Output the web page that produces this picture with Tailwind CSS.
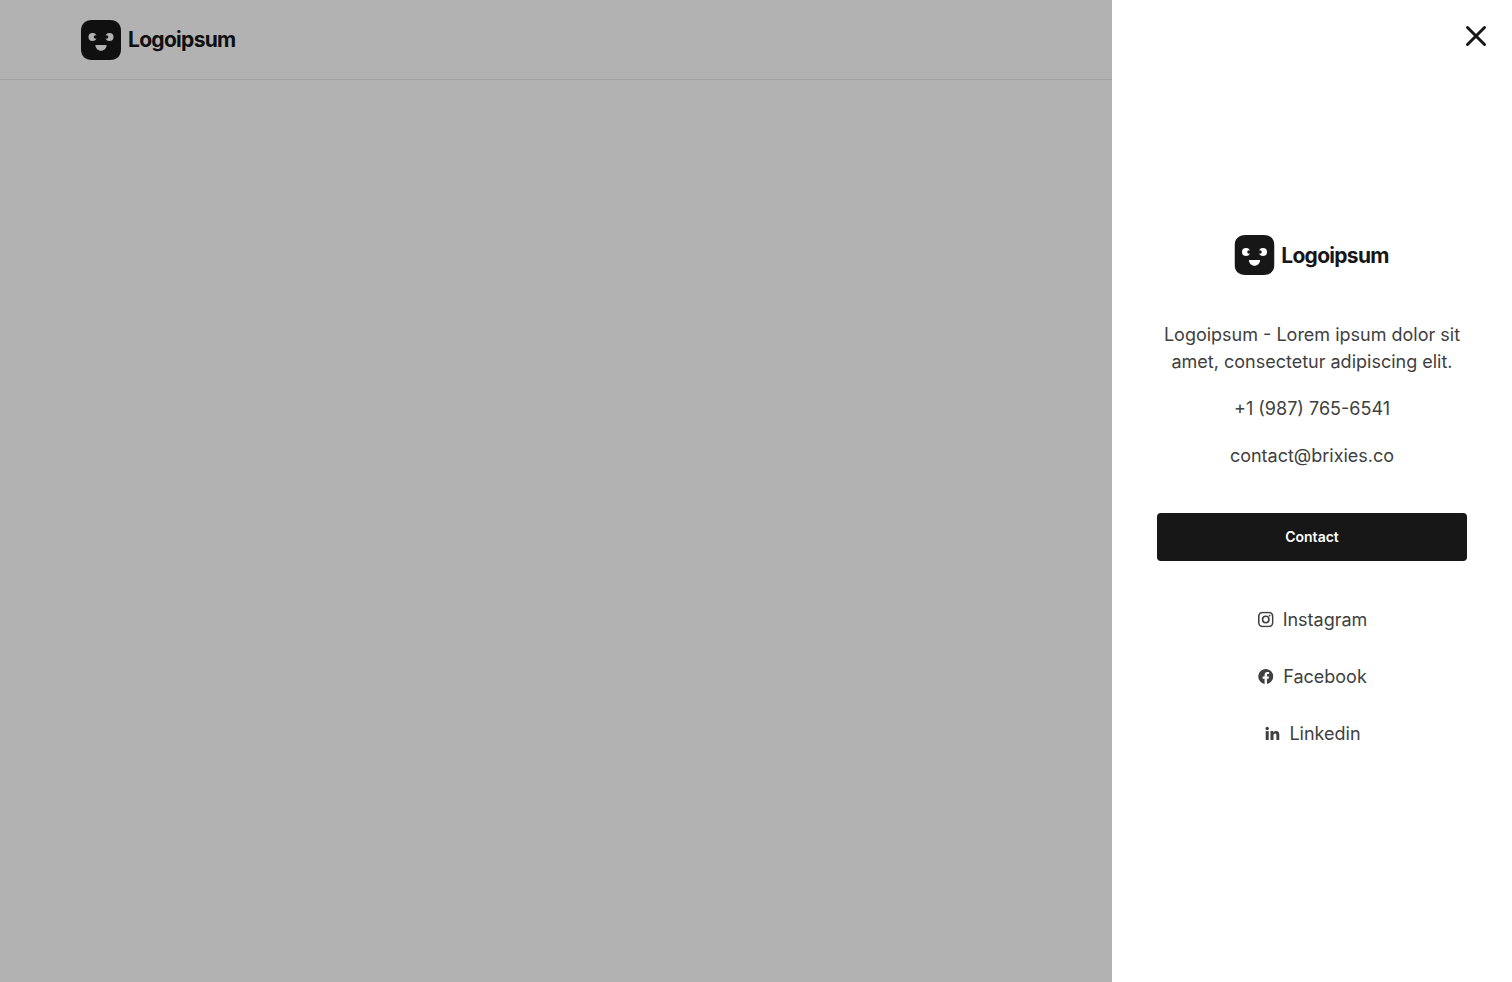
<!DOCTYPE html>
<html lang="en">
<head>
  <meta charset="UTF-8">
  <meta name="viewport" content="width=device-width, initial-scale=1.0">
  <title>Logoipsum</title>
  <script src="https://cdn.jsdelivr.net/npm/@tailwindcss/browser@4"></script>
</head>
<body class="h-[982px] overflow-hidden bg-white font-['Inter',sans-serif]">
  <!-- Page header -->
  <header class="flex h-20 items-center border-b border-[#e5e5e5] pl-[81px]">
    <a href="#" class="flex items-center gap-[7px]">
      <svg class="size-10" viewBox="0 0 40 40">
        <path d="M11 0H29C36 0 40 4 40 11V29C40 36 36 40 29 40H11C4 40 0 36 0 29V11C0 4 4 0 11 0Z" fill="#171717"/>
        <circle cx="11.5" cy="17" r="4" fill="#fff"/>
        <circle cx="28.5" cy="17" r="4" fill="#fff"/>
        <circle cx="14.5" cy="17" r="1.8" fill="#171717"/>
        <circle cx="25.5" cy="17" r="1.8" fill="#171717"/>
        <path d="M14.4 25H25.6C25.6 28.4 23 30.8 20 30.8C17 30.8 14.4 28.4 14.4 25Z" fill="#fff"/>
      </svg>
      <span class="text-[21px] leading-none font-bold tracking-[-0.7px] text-[#171717]">Logoipsum</span>
    </a>
  </header>

  <!-- Overlay -->
  <div class="fixed inset-0 bg-black/30"></div>

  <!-- Side drawer -->
  <aside class="fixed inset-y-0 right-0 flex w-[400px] flex-col items-center justify-center bg-white px-[45px] text-center text-lg leading-[27px] text-[#404040]">
    <button class="absolute top-[20px] right-[20px] text-[#171717]">
      <svg class="block size-8" viewBox="0 0 32 32" fill="none" stroke="currentColor" stroke-width="3" stroke-linecap="round">
        <path d="M7.5 7.5L24.5 24.5M24.5 7.5L7.5 24.5"/>
      </svg>
    </button>

    <a href="#" class="mb-[46px] flex -translate-x-[0.5px] items-center gap-[7px]">
      <svg class="size-10" viewBox="0 0 40 40">
        <path d="M11 0H29C36 0 40 4 40 11V29C40 36 36 40 29 40H11C4 40 0 36 0 29V11C0 4 4 0 11 0Z" fill="#171717"/>
        <circle cx="11.5" cy="17" r="4" fill="#fff"/>
        <circle cx="28.5" cy="17" r="4" fill="#fff"/>
        <circle cx="14.5" cy="17" r="1.8" fill="#171717"/>
        <circle cx="25.5" cy="17" r="1.8" fill="#171717"/>
        <path d="M14.4 25H25.6C25.6 28.4 23 30.8 20 30.8C17 30.8 14.4 28.4 14.4 25Z" fill="#fff"/>
      </svg>
      <span class="text-[21px] leading-none font-bold tracking-[-0.7px] text-[#171717]">Logoipsum</span>
    </a>

    <div class="flex flex-col gap-5">
      <p>Logoipsum - Lorem ipsum dolor sit amet, consectetur adipiscing elit.</p>
      <p>+1 (987) 765-6541</p>
      <p>contact@brixies.co</p>
    </div>

    <button class="mt-[44px] mb-[45px] h-12 w-full rounded bg-[#171717] text-sm font-semibold text-white">Contact</button>

    <div class="flex flex-col items-center gap-[30px]">
      <a href="#" class="flex items-center gap-[10px]">
        <svg class="size-4 translate-x-[0.75px] -translate-y-[0.5px]" viewBox="0 0 16 16" fill="none" stroke="currentColor" stroke-width="1.6">
          <rect x="1" y="1" width="14" height="14" rx="4"/>
          <circle cx="8" cy="8" r="3.2"/>
          <circle cx="11.9" cy="4.1" r="0.9" fill="currentColor" stroke="none"/>
        </svg>
        Instagram
      </a>
      <a href="#" class="flex items-center gap-[10px]">
        <svg class="size-4 translate-x-[0.75px] -translate-y-[0.5px]" viewBox="0 0 16 16" fill="currentColor">
          <path d="M15.5 8A7.5 7.5 0 1 0 6.83 15.41V10.17H4.92V8H6.83V6.35C6.83 4.47 7.95 3.43 9.66 3.43C10.48 3.43 11.34 3.58 11.34 3.58V5.42H10.39C9.46 5.42 9.17 6 9.17 6.59V8H11.25L10.92 10.17H9.17V15.41A7.5 7.5 0 0 0 15.5 8Z"/>
        </svg>
        Facebook
      </a>
      <a href="#" class="flex items-center gap-[10px]">
        <svg class="size-4 translate-x-[1.5px] -translate-y-[0.5px]" viewBox="0 0 16 16" fill="currentColor">
          <rect x="1.2" y="5.6" width="3" height="8.9"/>
          <circle cx="2.7" cy="3" r="1.7"/>
          <path d="M6 5.6H8.8V6.9C9.3 6 10.3 5.4 11.5 5.4C14 5.4 14.8 7 14.8 9.4V14.5H11.9V10C11.9 8.9 11.7 8 10.6 8C9.5 8 9 8.8 9 10V14.5H6V5.6Z"/>
        </svg>
        Linkedin
      </a>
    </div>
  </aside>
</body>
</html>
